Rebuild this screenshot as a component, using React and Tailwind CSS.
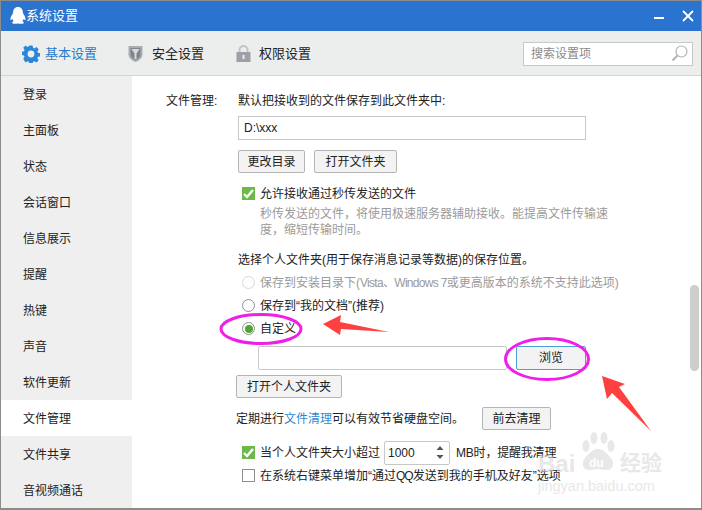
import { X } from 'lucide-react';

const menuItems = ['登录', '主面板', '状态', '会话窗口', '信息展示', '提醒', '热键', '声音', '软件更新', '文件管理', '文件共享', '音视频通话'];

function Btn({ children, className = '' }) {
    return (
        <button className={`h-[23px] rounded-[2px] border border-[#b4b4b4] bg-[#f3f3f3] text-[12px] text-[#222] flex items-center justify-center ${className}`}>
            {children}
        </button>
    );
}

function Radio({ on, faded, children }) {
    return (
        <div className="flex items-center h-[23px] pl-[4px] gap-[5px]">
            <span className={`w-[13px] h-[13px] shrink-0 rounded-full border bg-white flex items-center justify-center ${faded ? 'border-[#d8d8d8]' : 'border-[#8e8e8e]'}`}>
                {on && <span className="w-[8px] h-[8px] rounded-full bg-[#4ea72e]" />}
            </span>
            <span className={faded ? 'text-[#9a9a9a]' : 'text-[#222]'}>{children}</span>
        </div>
    );
}

function Tick() {
    return (
        <span className="w-[13px] h-[13px] bg-[#6cb94a] flex items-center justify-center shrink-0">
            <svg width="11" height="10" viewBox="0 0 11 10">
                <path d="M1 5l3 3 6-7" fill="none" stroke="#fff" strokeWidth="2.4" />
            </svg>
        </span>
    );
}

export default function App() {
    return (
        <div className="relative w-[702px] h-[510px] bg-white border-t border-x border-b-2 border-[#8c8c8c] flex flex-col overflow-hidden text-[12px] text-[#222] font-['Liberation_Sans','Noto_Sans_CJK_SC',sans-serif]">
            {/* Title bar */}
            <div className="h-[30px] bg-[#2a74d0] flex items-center pl-[8px] pr-[4px] text-white shrink-0">
                <svg width="18" height="20" viewBox="0 0 18 20">
                    <path d="M9 1C5.600 1 4.200 3.600 4.100 6.400c-.1 1-.8 1.800-1.500 3C1.600 11.200 1 13.400 1.700 14c.5.300 1.200-.6 1.600-1.200.2 1 .8 1.900 1.500 2.500-1 .4-1.900 1-1.600 1.800.3.800 2.800.9 5.800.3 3 .6 5.500.5 5.800-.3.300-.8-.6-1.400-1.600-1.800.7-.6 1.300-1.500 1.500-2.500.4.600 1.100 1.500 1.600 1.200.7-.6.100-2.800-.9-4.600-.7-1.200-1.400-2-1.500-3C13.800 3.600 12.400 1 9 1z" fill="#fff" />
                </svg>
                <span className="text-[13px] ml-[-1px]">系统设置</span>
                <div className="ml-auto flex items-center gap-[15px]">
                    <span className="w-[10px] h-[2px] bg-white mt-[4px]" />
                    <X size={18} strokeWidth={2.4} />
                </div>
            </div>

            {/* Toolbar */}
            <div className="h-[45px] pt-[1px] bg-[#eceeee] border-b border-[#d4d4d4] flex items-center pl-[21px] pr-[8px] text-[13px] shrink-0">
                <div className="flex items-center gap-[5px] text-[#2a7cc8]">
                    <svg width="18" height="18" viewBox="0 0 18 18">
                        <path d="M7.300 0h3.400l.5 2.500 1.400.6 2.200-1.400 2.400 2.400-1.400 2.200.6 1.400 2.500.5v3.400l-2.500.5-.6 1.400 1.400 2.200-2.400 2.400-2.200-1.400-1.400.6-.5 2.500H7.300l-.5-2.500-1.400-.6-2.200 1.400L.8 14.200l1.400-2.200-.6-1.400L-.9 10V6.600l2.500-.5.6-1.400L.8 2.500 3.200.1l2.200 1.400 1.400-.6z" fill="#2a86d8" transform="translate(.5 .5) scale(.94)" />
                        <circle cx="9" cy="9" r="3.400" fill="#eceeee" />
                    </svg>
                    <span>基本设置</span>
                </div>
                <div className="flex items-center gap-[9px] ml-[31px]">
                    <svg width="15" height="18" viewBox="0 0 15 18">
                        <path d="M.5 1h14v8.500c0 3.500-3.500 6-7 7.500-3.500-1.500-7-4-7-7.500z" fill="#a8adb1" />
                        <path d="M2.500 3h10v6.500c0 2.400-2.500 4.300-5 5.400-2.500-1.100-5-3-5-5.400z" fill="#7f868b" />
                        <path d="M3.500 4h8L8.500 8.500V14h-2V8.500z" fill="#d8dadb" />
                    </svg>
                    <span>安全设置</span>
                </div>
                <div className="flex items-center gap-[8px] ml-[32px]">
                    <svg width="15" height="17" viewBox="0 0 15 17">
                        <path d="M3.500 8V5a4 4 0 0 1 8 0v3" fill="none" stroke="#c2c5c7" strokeWidth="2" />
                        <rect x="0.500" y="7" width="14" height="10" fill="#9ba1a6" />
                        <rect x="6.500" y="10" width="2" height="4" fill="#eceeee" />
                    </svg>
                    <span>权限设置</span>
                </div>
                <div className="ml-auto w-[170px] h-[24px] bg-white border border-[#c8c8c8] flex items-center justify-between pl-[7px] pr-[4px] text-[12px] text-[#8a8a8a]">
                    <span>搜索设置项</span>
                    <svg width="17" height="17" viewBox="0 0 17 17">
                        <circle cx="10.500" cy="6.500" r="5.500" fill="none" stroke="#b4b4b4" strokeWidth="1.200" />
                        <path d="M6.500 10.500L1.500 15.500" stroke="#b4b4b4" strokeWidth="2" />
                    </svg>
                </div>
            </div>

            <div className="flex flex-1 min-h-0">
                {/* Sidebar */}
                <div className="w-[131px] bg-[#efefef] shrink-0">
                    {menuItems.map(item => (
                        <div key={item} className={`h-[36px] pt-[1px] flex items-center pl-[22px] ${item === '文件管理' ? 'bg-white' : ''}`}>
                            {item}
                        </div>
                    ))}
                </div>

                {/* Settings panel */}
                <div className="flex-1 flex pl-[34px] pt-[17px]">
                    <div className="w-[72px] shrink-0 h-[17px] leading-[17px]">文件管理:</div>
                    <div className="w-[349px] shrink-0">
                        <div className="h-[17px] leading-[17px]">默认把接收到的文件保存到此文件夹中:</div>
                        <div className="mt-[6px] h-[24px] border border-[#c8c8c8] flex items-center pl-[5px] w-[348px]">D:\xxx</div>
                        <div className="mt-[10px] flex gap-[9px]">
                            <Btn className="w-[67px]">更改目录</Btn>
                            <Btn className="w-[83px]">打开文件夹</Btn>
                        </div>
                        <div className="mt-[12px] flex items-center gap-[5px] pl-[4px] h-[17px]">
                            <Tick />
                            <span>允许接收通过秒传发送的文件</span>
                        </div>
                        <div className="mt-[4px] ml-[22px] text-[#9a9a9a] leading-[16px] whitespace-nowrap">
                            秒传发送的文件，将使用极速服务器辅助接收。能提高文件传输速<br />度，缩短传输时间。
                        </div>
                        <div className="mt-[14px] h-[17px] leading-[17px] whitespace-nowrap">选择个人文件夹(用于保存消息记录等数据)的保存位置。</div>
                        <div className="mt-[2px] whitespace-nowrap">
                            <Radio faded>保存到安装目录下(<span className="tracking-[-0.7px]">Vista、Windows 7</span>或更高版本的系统不支持此选项)</Radio>
                            <Radio>保存到“我的文档”(推荐)</Radio>
                            <Radio on>自定义</Radio>
                        </div>
                        <div className="mt-[6px] flex items-center ml-[20px]">
                            <div className="w-[249px] h-[24px] border border-[#c8c8c8] rounded-[2px]" />
                            <Btn className="ml-[9px] w-[70px] !h-[24px] !border-[#4a9fd8]">浏览</Btn>
                        </div>
                        <Btn className="mt-[5px] -ml-[2px] w-[106px]">打开个人文件夹</Btn>
                        <div className="mt-[9px] flex items-center justify-between w-[315px] whitespace-nowrap -ml-[2px]">
                            <span>定期进行<span className="text-[#2a8ad8]">文件清理</span>可以有效节省硬盘空间。</span>
                            <Btn className="w-[69px]">前去清理</Btn>
                        </div>
                        <div className="mt-[11px] flex items-center pl-[4px] h-[23px] whitespace-nowrap">
                            <Tick />
                            <span className="ml-[5px]">当个人文件夹大小超过</span>
                            <div className="ml-[4px] w-[66px] h-[24px] border border-[#c8c8c8] rounded-[2px] flex items-center justify-between pl-[3px] pr-[5px]">
                                <span>1000</span>
                                <svg width="8" height="15" viewBox="0 0 8 15">
                                    <path d="M4 1l3.500 4h-7zM4 14l3.500-4h-7z" fill="#555" />
                                </svg>
                            </div>
                            <span className="ml-[6px] tracking-[-0.2px]">MB时，提醒我清理</span>
                        </div>
                        <div className="mt-[3px] flex items-center pl-[4px] h-[17px] whitespace-nowrap">
                            <span className="w-[13px] h-[13px] border border-[#8e8e8e] shrink-0" />
                            <span className="ml-[5px]">在系统右键菜单增加“通过<span className="tracking-[-1px]">QQ</span>发送到我的手机及好友”选项</span>
                        </div>
                    </div>
                    {/* Scrollbar */}
                    <div className="ml-auto w-[11px] shrink-0 -mt-[17px]">
                        <div className="mt-[209px] w-[9px] h-[86px] bg-[#cdcdcd] rounded-[5px]" />
                    </div>
                </div>
            </div>

            {/* Annotations drawn on top of the screenshot */}
            <svg width="702" height="510" viewBox="0 0 702 510" className="absolute -left-[1px] -top-[1px] pointer-events-none">
                <ellipse cx="261" cy="329" rx="40" ry="14.500" fill="none" stroke="#f01fe8" strokeWidth="3" />
                <ellipse cx="547" cy="359" rx="41.500" ry="20.500" fill="none" stroke="#f01fe8" strokeWidth="3" />
                <path d="M323 324l18-9-1 7 49 10-48-3-1 6z" fill="#ff4040" />
                <path d="M602 376l5 23 5-6 39 38-32-44 6-3z" fill="#ff4040" />
                <g fill="#d9d9d9" opacity="0.6" fontFamily="Liberation Sans">
                    <ellipse cx="586" cy="446" rx="3.500" ry="6" />
                    <ellipse cx="594" cy="438" rx="3.500" ry="6" />
                    <ellipse cx="604" cy="438" rx="3.500" ry="6" />
                    <ellipse cx="611" cy="446" rx="3.500" ry="6" />
                    <path d="M598 449c-6 0-9 5-13 9-4 5-2 12 4 12 4 0 6-1 9-1s5 1 9 1c6 0 8-7 4-12-4-4-7-9-13-9z" />
                    <text x="538" y="472" fontSize="24" fontWeight="700">Bai</text>
                    <text x="589" y="467" fontSize="12" fontWeight="700" fill="#fff">du</text>
                    <text x="620" y="470" fontSize="21" fontWeight="700" fontFamily="Noto Sans CJK SC">经验</text>
                    <text x="538" y="491" fontSize="14.500">jingyan.baidu.com</text>
                </g>
            </svg>
        </div>
    );
}
